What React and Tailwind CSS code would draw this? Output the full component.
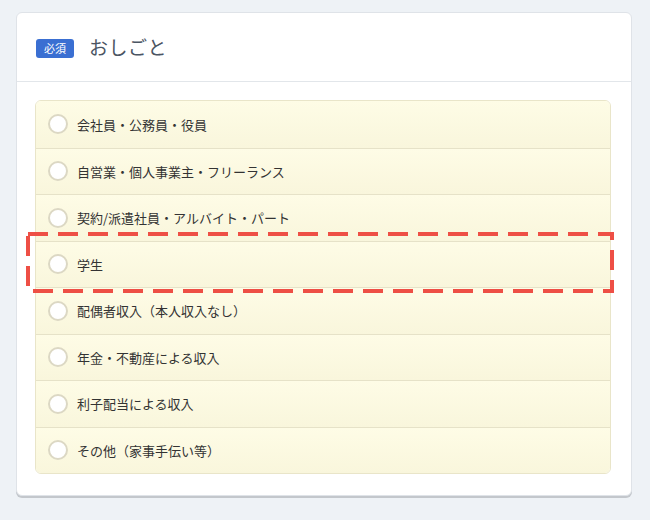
import React from 'react';

const options = [
    '会社員・公務員・役員',
    '自営業・個人事業主・フリーランス',
    '契約/派遣社員・アルバイト・パート',
    '学生',
    '配偶者収入（本人収入なし）',
    '年金・不動産による収入',
    '利子配当による収入',
    'その他（家事手伝い等）',
];

const font = { fontFamily: '"Noto Sans CJK JP", "Noto Sans", sans-serif' };

const App = () => {
    return (
        <div className="w-[650px] h-[520px] bg-[#eef2f6] pt-3 px-4" style={font}>
            <div className="relative w-[616px] bg-white rounded-md border border-[#dfe3e8] shadow-[0_2px_0_#c3c7cc]">
                <div className="flex items-center h-[69px] px-[19px] border-b border-[#e2e6ea]">
                    <span className="bg-[#3a6fd2] text-white text-[11px] leading-none rounded-[3px] px-[8px] py-[4px] mt-[2px]">必須</span>
                    <span className="ml-[15px] text-[19px] text-[#4b5563] tracking-wide">おしごと</span>
                </div>
                <div className="pl-[18px] pr-[20px] pt-[18px] pb-[21px]">
                    <ul className="border border-[#e9e5c9] rounded-md overflow-hidden">
                        {options.map((label, i) => (
                            <li
                                key={label}
                                className={
                                    'flex items-center h-[46.5px] pl-[12px] bg-gradient-to-b from-[#fefce6] to-[#f9f6dc] ' +
                                    (i > 0 ? 'border-t border-[#e6e2c8]' : '')
                                }
                            >
                                <span className="w-[20px] h-[20px] rounded-full bg-white border-2 border-[#dcd8c4]" />
                                <span className="ml-[9px] text-[13px] text-[#333]">{label}</span>
                            </li>
                        ))}
                    </ul>
                </div>
                <svg className="absolute left-[9px] top-[219px]" width="588" height="61">
                    <rect x="2" y="2" width="584" height="57" fill="none" stroke="#ee4f45" strokeWidth="4" strokeDasharray="20 10" />
                </svg>
            </div>
        </div>
    );
};

export default App;
